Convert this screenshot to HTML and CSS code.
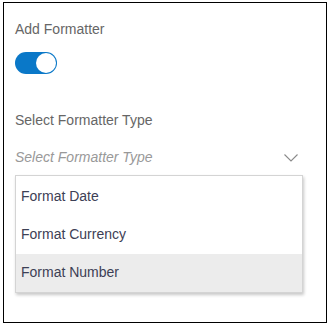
FILE: index.html
```html
<!DOCTYPE html>
<html>
<head>
<meta charset="utf-8">
<link rel="stylesheet" href="styles.css">
</head>
<body>
<div class="frame">
  <div class="label">Add Formatter</div>
  <div class="toggle"><span class="knob"></span></div>
  <div class="label label-type">Select Formatter Type</div>
  <div class="field">
    <div class="select">
      <span class="placeholder">Select Formatter Type</span>
      <svg class="chevron" width="14" height="8" viewBox="0 0 14 8"><path d="M0.5 0.5 L7 7 L13.5 0.5" fill="none" stroke="#8a8a8a" stroke-width="1.1"/></svg>
    </div>
    <ul class="menu">
      <li class="item">Format Date</li>
      <li class="item">Format Currency</li>
      <li class="item item-active">Format Number</li>
    </ul>
  </div>
</div>
</body>
</html>
```
FILE: styles.css
```css
html, body {
  margin: 0;
  padding: 0;
  background: #fff;
}
body {
  padding: 2px 0 0 3px;
  font-family: "Liberation Sans", Arial, sans-serif;
  font-size: 14px;
}
.frame {
  box-sizing: border-box;
  width: 324px;
  height: 321px;
  border: 1px solid #000;
  padding: 18px 0 0 11px;
}
.label {
  color: #666;
  line-height: 16px;
}
.toggle {
  position: relative;
  margin-top: 15px;
  width: 42px;
  height: 22px;
  border-radius: 11px;
  background: #0a78c8;
}
.knob {
  position: absolute;
  top: 1px;
  right: 1px;
  width: 20px;
  height: 20px;
  border-radius: 50%;
  background: #fff;
}
.label-type {
  margin-top: 38px;
}
.field {
  width: 288px;
}
.select {
  margin-top: 21px;
  display: flex;
  align-items: center;
  justify-content: space-between;
  line-height: 16px;
}
.placeholder {
  color: #999;
  font-style: italic;
}
.chevron {
  display: block;
  margin-right: 5px;
  margin-top: 1px;
}
.menu {
  list-style: none;
  margin: 10px 0 0 0;
  padding: 2px 0 0 0;
  border: 1px solid #d4d4d4;
  box-shadow: 1px 2px 3px rgba(0, 0, 0, 0.22);
  background: #fff;
}
.item {
  height: 38px;
  line-height: 37px;
  padding-left: 5px;
  color: #3d4055;
}
.item-active {
  background: #ececec;
}
```
